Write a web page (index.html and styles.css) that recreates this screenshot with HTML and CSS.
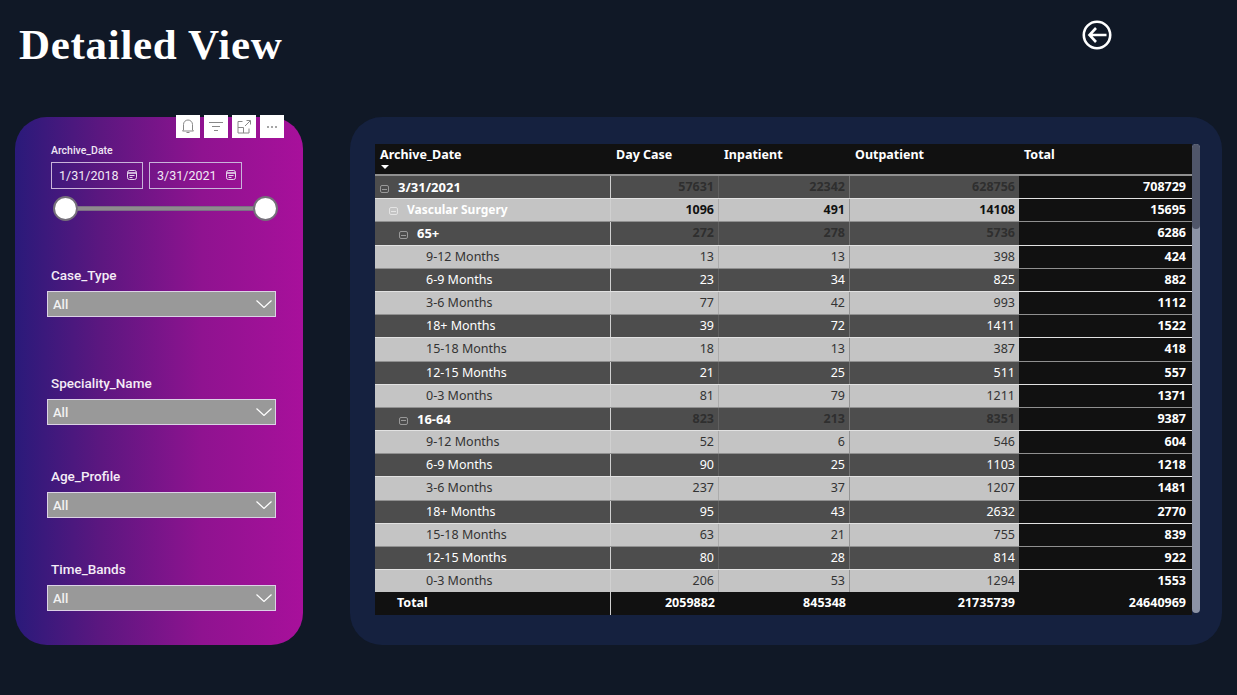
FILE: index.html
```html
<!DOCTYPE html>
<html lang="en">
<head>
  <meta charset="UTF-8">
  <meta name="viewport" content="width=device-width, initial-scale=1.0">
  <title>Detailed View</title>
  <link rel="stylesheet" href="styles.css">
</head>
<body>

  <header class="top">
    <h1 class="title">Detailed View</h1>
    <svg class="back" width="30" height="30" viewBox="0 0 30 30" fill="none" stroke="#fff" stroke-width="2.600">
      <circle cx="15" cy="15" r="13.200"/>
      <path d="M24.500 15H7.500M14 8l-6.500 7 6.500 7"/>
    </svg>
  </header>

  <main class="content">
    <section class="filters">
      <div class="tools">
        <span class="tool"><svg width="12" height="15" viewBox="0 0 12 15" fill="none" stroke="#888"><path d="M1.500 11V5.500a4.500 4.500 0 0 1 9 0V11l1 1H.5zM4.500 13.500h3"/></svg></span>
        <span class="tool"><svg width="14" height="11" viewBox="0 0 14 11" fill="none" stroke="#888"><path d="M0 1.500h14M3 5.500h8M5 9.500h4"/></svg></span>
        <span class="tool"><svg width="14" height="14" viewBox="0 0 14 14" fill="none" stroke="#888"><path d="M5.500 1.500H1v11.500h11V8.500M1 7.500h5.500V13M8 6l5-5M9.500 .5H13.500V4.500"/></svg></span>
        <span class="tool"><svg width="12" height="4" viewBox="0 0 12 4" fill="#888"><circle cx="2" cy="2" r="1"/><circle cx="6" cy="2" r="1"/><circle cx="10" cy="2" r="1"/></svg></span>
      </div>

      <div class="date-slicer">
        <div class="date-label">Archive_Date</div>
        <div class="date-inputs">
          <div class="date-box">1/31/2018
            <svg class="cal" width="10" height="10" viewBox="0 0 10 10" fill="none" stroke="#e4d8ec"><rect x=".5" y=".5" width="9" height="9" rx="2"/><path d="M.5 3h9" stroke-width="1.600"/><path d="M2.500 5.500h5M2.500 7.500h3"/></svg>
          </div>
          <div class="date-box">3/31/2021
            <svg class="cal" width="10" height="10" viewBox="0 0 10 10" fill="none" stroke="#e4d8ec"><rect x=".5" y=".5" width="9" height="9" rx="2"/><path d="M.5 3h9" stroke-width="1.600"/><path d="M2.500 5.500h5M2.500 7.500h3"/></svg>
          </div>
        </div>
        <div class="range">
          <span class="handle"></span>
          <span class="track"></span>
          <span class="handle"></span>
        </div>
      </div>

      <div class="slicer slicer-first">
        <div class="slicer-label">Case_Type</div>
        <div class="dropdown">All <svg width="16" height="8" viewBox="0 0 16 8" fill="none" stroke="#fff" stroke-width="1.200"><path d="M.5.500 8 7.500 15.500.500"/></svg></div>
      </div>
      <div class="slicer slicer-second">
        <div class="slicer-label">Speciality_Name</div>
        <div class="dropdown">All <svg width="16" height="8" viewBox="0 0 16 8" fill="none" stroke="#fff" stroke-width="1.200"><path d="M.5.500 8 7.500 15.500.500"/></svg></div>
      </div>
      <div class="slicer">
        <div class="slicer-label">Age_Profile</div>
        <div class="dropdown">All <svg width="16" height="8" viewBox="0 0 16 8" fill="none" stroke="#fff" stroke-width="1.200"><path d="M.5.500 8 7.500 15.500.500"/></svg></div>
      </div>
      <div class="slicer">
        <div class="slicer-label">Time_Bands</div>
        <div class="dropdown">All <svg width="16" height="8" viewBox="0 0 16 8" fill="none" stroke="#fff" stroke-width="1.200"><path d="M.5.500 8 7.500 15.500.500"/></svg></div>
      </div>
    </section>

    <section class="matrix-card">
      <div class="matrix">
        <div class="row head">
          <div>Archive_Date<span class="sort"></span></div><div>Day Case</div><div>Inpatient</div><div>Outpatient</div><div>Total</div>
        </div>

        <div class="row dark group"><div class="lvl0"><i class="minus"></i>3/31/2021</div><div>57631</div><div>22342</div><div>628756</div><div>708729</div></div>
        <div class="row light group"><div class="lvl1"><i class="minus"></i>Vascular Surgery</div><div>1096</div><div>491</div><div>14108</div><div>15695</div></div>
        <div class="row dark group"><div class="lvl2"><i class="minus"></i>65+</div><div>272</div><div>278</div><div>5736</div><div>6286</div></div>
        <div class="row light"><div class="lvl3">9-12 Months</div><div>13</div><div>13</div><div>398</div><div>424</div></div>
        <div class="row dark"><div class="lvl3">6-9 Months</div><div>23</div><div>34</div><div>825</div><div>882</div></div>
        <div class="row light"><div class="lvl3">3-6 Months</div><div>77</div><div>42</div><div>993</div><div>1112</div></div>
        <div class="row dark"><div class="lvl3">18+ Months</div><div>39</div><div>72</div><div>1411</div><div>1522</div></div>
        <div class="row light"><div class="lvl3">15-18 Months</div><div>18</div><div>13</div><div>387</div><div>418</div></div>
        <div class="row dark"><div class="lvl3">12-15 Months</div><div>21</div><div>25</div><div>511</div><div>557</div></div>
        <div class="row light"><div class="lvl3">0-3 Months</div><div>81</div><div>79</div><div>1211</div><div>1371</div></div>
        <div class="row dark group"><div class="lvl2"><i class="minus"></i>16-64</div><div>823</div><div>213</div><div>8351</div><div>9387</div></div>
        <div class="row light"><div class="lvl3">9-12 Months</div><div>52</div><div>6</div><div>546</div><div>604</div></div>
        <div class="row dark"><div class="lvl3">6-9 Months</div><div>90</div><div>25</div><div>1103</div><div>1218</div></div>
        <div class="row light"><div class="lvl3">3-6 Months</div><div>237</div><div>37</div><div>1207</div><div>1481</div></div>
        <div class="row dark"><div class="lvl3">18+ Months</div><div>95</div><div>43</div><div>2632</div><div>2770</div></div>
        <div class="row light"><div class="lvl3">15-18 Months</div><div>63</div><div>21</div><div>755</div><div>839</div></div>
        <div class="row dark"><div class="lvl3">12-15 Months</div><div>80</div><div>28</div><div>814</div><div>922</div></div>
        <div class="row light"><div class="lvl3">0-3 Months</div><div>206</div><div>53</div><div>1294</div><div>1553</div></div>

        <div class="row totals"><div class="lvl0">Total</div><div>2059882</div><div>845348</div><div>21735739</div><div>24640969</div></div>
      </div>
      <div class="scrollbar"><span class="thumb"></span></div>
    </section>
  </main>

</body>
</html>
```

FILE: styles.css
```css
html, body {
  height: 100%;
}

body {
  margin: 0;
  background-color: #101826;
  color: #fff;
  font-family: 'Noto Sans', 'Open Sans', sans-serif;
  overflow: hidden;
}

.top {
  height: 117px;
  display: flex;
  justify-content: space-between;
  align-items: flex-start;
  padding: 0 125px 0 19px;
  box-sizing: border-box;
}

.title {
  margin: 20px 0 0;
  font-family: 'Liberation Serif', serif;
  font-size: 43px;
  line-height: 50px;
  font-weight: bold;
  letter-spacing: 0.7px;
}

.back {
  margin-top: 20px;
}

.content {
  display: flex;
  gap: 47px;
  padding: 0 15px;
  height: 528px;
}

/* left slicer panel */
.filters {
  position: relative;
  width: 288px;
  flex: none;
  border-radius: 32px;
  background: linear-gradient(90deg, #2a1a7a 0%, #5c1780 30%, #8f1390 65%, #a8109b 100%);
  padding: 27px 0 0 32px;
  box-sizing: border-box;
  font-family: Roboto, 'Noto Sans', sans-serif;
}

.tools {
  position: absolute;
  top: -2px;
  right: 19px;
  display: flex;
  gap: 4px;
}

.tool {
  width: 24px;
  height: 23px;
  background: #fff;
  display: flex;
  align-items: center;
  justify-content: center;
}

.date-slicer {
  padding-left: 4px;
}

.date-label {
  font-size: 10.500px;
  font-weight: 500;
  line-height: 14px;
  color: #efe6f4;
}

.date-inputs {
  display: flex;
  gap: 6px;
  margin-top: 4px;
}

.date-box {
  position: relative;
  width: 93px;
  height: 27px;
  box-sizing: border-box;
  border: 1px solid #c9b4da;
  padding-left: 7px;
  font-size: 12.500px;
  line-height: 26px;
  color: #f2eaf6;
}

.date-box:first-child {
  width: 92px;
}

.cal {
  position: absolute;
  right: 5px;
  top: 7px;
}

.range {
  display: flex;
  align-items: center;
  width: 225px;
  margin: 7px 0 0 2px;
}

.handle {
  width: 21px;
  height: 21px;
  flex: none;
  border-radius: 50%;
  background: #fff;
  border: 2px solid #75707a;
}

.track {
  flex: 1;
  height: 3px;
  background: #8f8a8e;
  box-shadow: 0 0 0 1px #7c6f85;
}

.slicer {
  margin-top: 43px;
}

.slicer-first {
  margin-top: 46px;
}

.slicer-second {
  margin-top: 58px;
}

.slicer-label {
  padding-left: 4px;
  font-size: 13.500px;
  font-weight: 500;
  line-height: 17px;
  color: #f4ecf6;
}

.dropdown {
  width: 229px;
  height: 26px;
  margin-top: 7px;
  box-sizing: border-box;
  border: 1px solid #dcd2e6;
  background: #999;
  padding: 0 3px 0 5px;
  display: flex;
  align-items: center;
  justify-content: space-between;
  font-size: 13px;
  font-weight: 500;
  color: #f2f2f2;
}

/* right table card */
.matrix-card {
  flex: 1;
  display: flex;
  align-items: flex-start;
  background-color: #15213f;
  border-radius: 32px;
  padding: 27px 22px 0 25px;
}

.matrix {
  width: 817px;
  font-size: 12.500px;
}

.row {
  display: grid;
  grid-template-columns: 236px 108px 131px 169px 173px;
  height: 23.200px;
  box-sizing: border-box;
  border-top: 1px solid #909090;
  line-height: 22px;
}

.row.light {
  border-top-color: #e2e2e2;
}

.row > div {
  padding-right: 4px;
  text-align: right;
  white-space: nowrap;
}

.row > div:first-child {
  text-align: left;
  border-right: 1px solid #d0d0d0;
}

.row > div:nth-child(2) {
  border-right: 1px solid rgba(130, 130, 130, 0.35);
}

.row > div:nth-child(3) {
  border-right: 1px solid rgba(130, 130, 130, 0.7);
}

.row > div:last-child {
  background-color: #111;
  color: #fff;
  font-weight: bold;
  padding-right: 6px;
}

.dark {
  background-color: #4d4d4d;
  color: #fff;
}

.light {
  background-color: #c4c4c4;
  color: #333;
}

.group {
  font-weight: bold;
}

.dark.group > div {
  color: #2f2f2f;
}

.light.group > div {
  color: #111;
}

.group > div:first-child, .dark.group > div:last-child, .light.group > div:last-child {
  color: #fff;
}

.dark.group > div:first-child {
  font-size: 13px;
}

.light.group > div:first-child {
  font-size: 12px;
}

.head {
  height: 31px;
  border-top: 0;
  border-bottom: 1px solid #909090;
  background-color: #111;
  font-weight: bold;
  line-height: 22px;
}

.head > div {
  padding-left: 5px;
  text-align: left;
  position: relative;
}

.row.head > div:first-child, .row.head > div:nth-child(2), .row.head > div:nth-child(3) {
  border-right: 0;
}

.row.head > div:last-child {
  text-align: left;
}

.sort {
  position: absolute;
  left: 6px;
  top: 21px;
  border: 4px solid transparent;
  border-top: 4px solid #fff;
}

.totals {
  height: 23px;
  background-color: #111;
  color: #fff;
  font-weight: bold;
  border-top: 0;
}

.row.totals > div:nth-child(2), .row.totals > div:nth-child(3) {
  border-right: 0;
}

.lvl0 { padding-left: 5px; }
.lvl1 { padding-left: 14px; }
.lvl2 { padding-left: 24px; }
.lvl3 { padding-left: 51px; }
.row.totals .lvl0 { padding-left: 22px; }

.minus {
  display: inline-block;
  vertical-align: -1px;
  width: 9px;
  height: 8px;
  margin-right: 9px;
  border-radius: 2px;
  background: linear-gradient(#999, #999) center / 5px 1px no-repeat;
  border: 1.500px solid #999;
  box-sizing: border-box;
}

.light .minus {
  background-image: linear-gradient(#e4e4e4, #e4e4e4);
  border-color: #e4e4e4;
}

.scrollbar {
  width: 8px;
  height: 469px;
  background: #8c93a6;
  border-radius: 4px;
  overflow: hidden;
}

.thumb {
  display: block;
  height: 85px;
  background: #50566a;
  border-radius: 4px;
}
```
